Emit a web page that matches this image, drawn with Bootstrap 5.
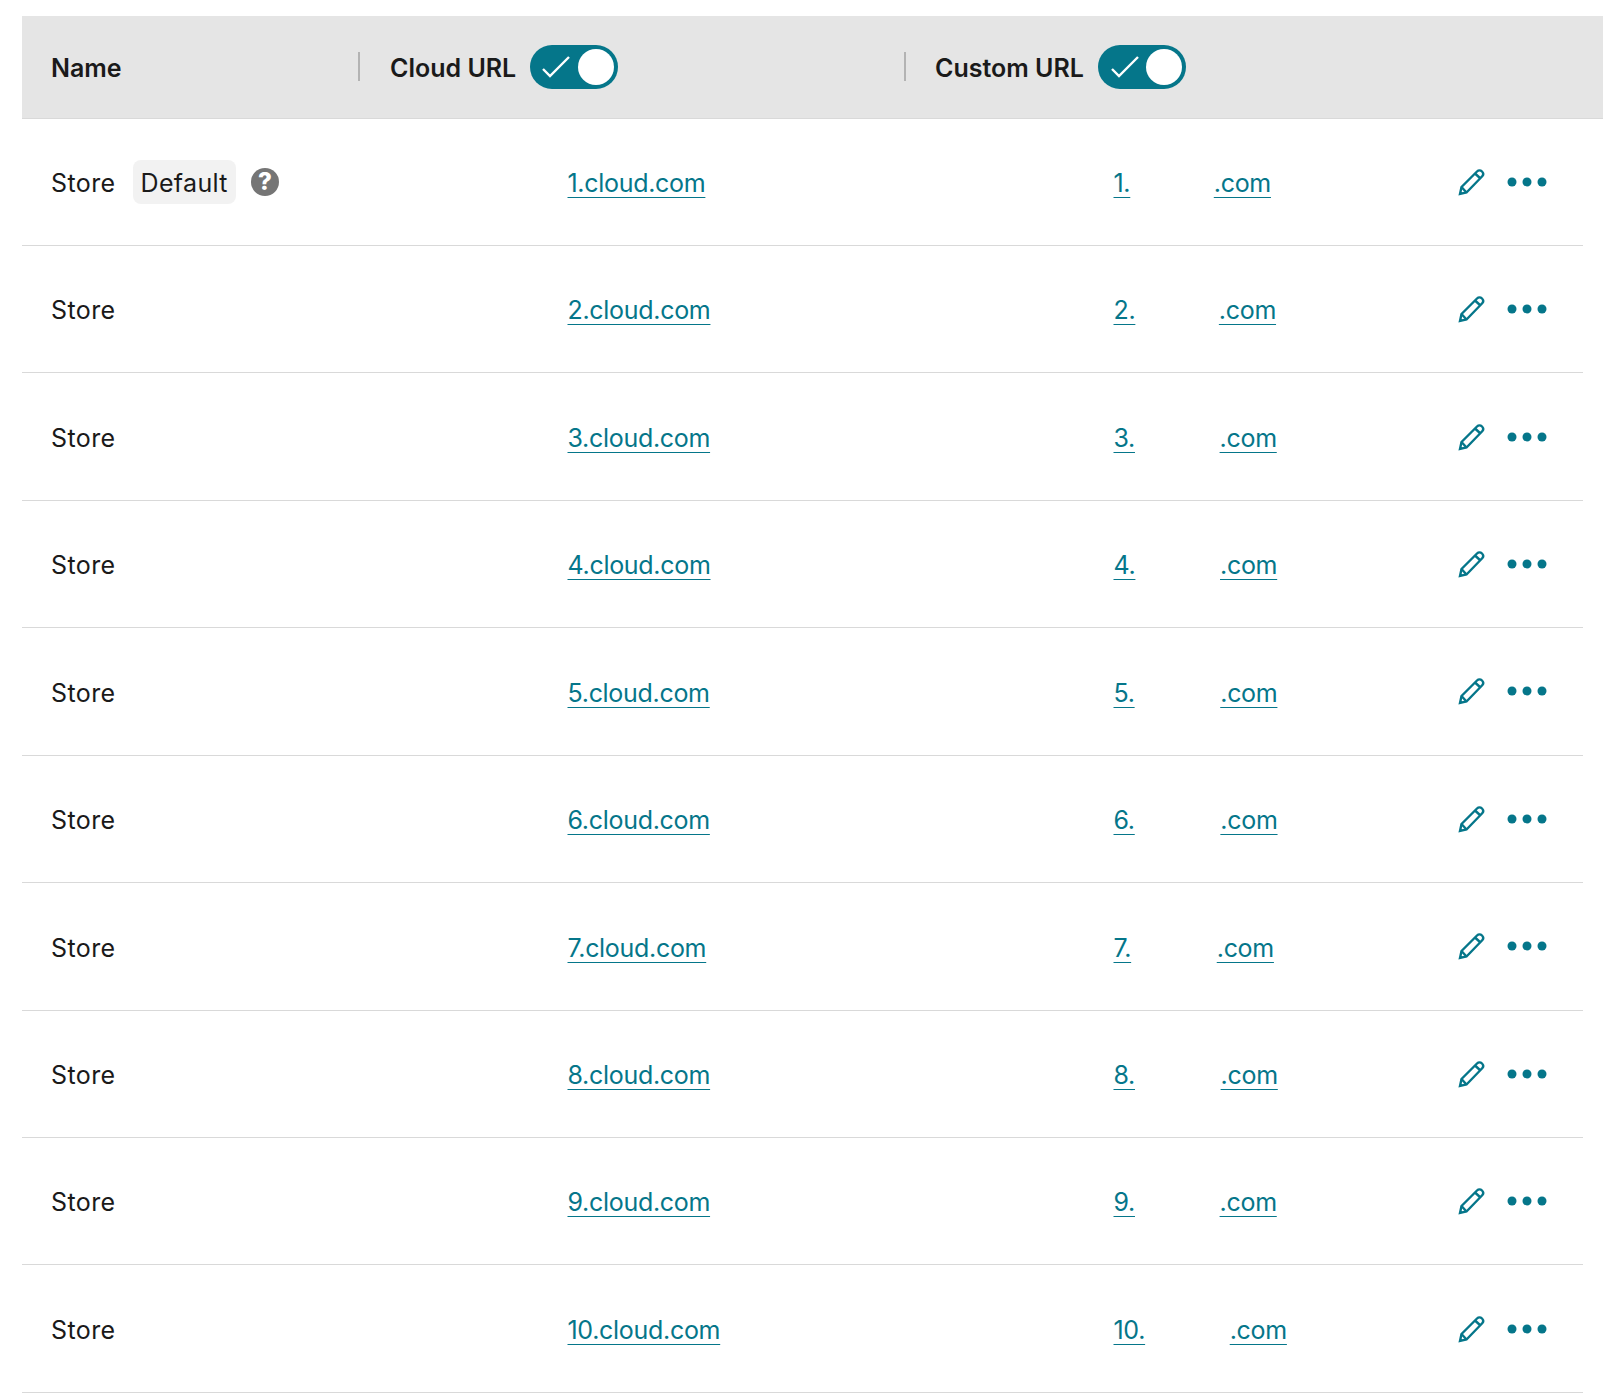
<!DOCTYPE html>
<html lang="en">
<head>
    <meta charset="UTF-8">
    <meta name="viewport" content="width=device-width, initial-scale=1.0">
    <title>Stores</title>
    <link href="https://cdn.jsdelivr.net/npm/bootstrap@5.3.0/dist/css/bootstrap.min.css" rel="stylesheet">
    <style>
        body {
            background-color: #fff;
            color: #1a1a1a;
            font-family: "Inter", "Liberation Sans", sans-serif;
            font-size: 25px;
            padding: 16px 0 0 22px;
        }
        .head-bar {
            height: 102.5px;
            background-color: #e5e5e5;
            border-bottom: 1px solid #d9d9d9;
            font-weight: 600;
        }
        .head-cell { height: 29px; border-left: 2px solid #b3b3b3; padding-left: 29px; gap: 14px; }
        .head-name { width: 336px; padding-left: 29px; padding-top: 4px; }
        .head-cloud { width: 546px; padding-left: 30px; }
        .head-label { padding-top: 4px; }
        .head-toggle {
            width: 87.5px;
            height: 44px;
            padding: 0 4px 0 12px;
            border-radius: 22px;
            background-color: #05768a;
        }
        .head-custom .head-toggle { width: 88.5px; padding-left: 13px; }
        .head-knob { width: 36px; height: 36px; border-radius: 50%; background-color: #fff; }
        .store-row {
            display: grid;
            grid-template-columns: 516.5px 546px 1fr auto;
            align-items: center;
            height: 127.45px;
            margin-right: 20px;
            padding-left: 29px;
            border-bottom: 1px solid #d9d9d9;
        }
        .store-name { padding-top: 4px; letter-spacing: .4px; }
        .store-url { padding-top: 4px; }
        .store-row a {
            color: #05768a;
            letter-spacing: -.3px;
            text-decoration-thickness: 1px;
            text-underline-offset: 5px;
        }
        .url-gap { display: inline-block; }
        .default-pill {
            height: 44px;
            padding: 4px 8px 0;
            margin-left: 17px;
            border-radius: 8px;
            background-color: #f2f2f2;
            letter-spacing: .35px;
        }
        .help-dot {
            width: 28px;
            height: 28px;
            margin-left: 15px;
            border-radius: 50%;
            background-color: #757575;
            color: #fff;
            font-size: 24px;
            font-weight: 800;
        }
        .row-actions { padding-right: 36.5px; gap: 21px; }
        .edit-icon { width: 28px; height: 28px; }
        .more-icon { width: 40px; height: 12px; }
    </style>
</head>
<body>
    <div class="head-bar d-flex align-items-center">
        <div class="head-name">Name</div>
        <div class="head-cell head-cloud d-flex align-items-center">
            <span class="head-label">Cloud URL</span>
            <div class="head-toggle d-flex align-items-center justify-content-between">
                <svg width="28" height="22" viewBox="0 0 28 22" fill="none" stroke="#fff" stroke-width="2.4"><path d="M1 13l7 7L27 1"/></svg>
                <div class="head-knob"></div>
            </div>
        </div>
        <div class="head-cell head-custom d-flex align-items-center">
            <span class="head-label">Custom URL</span>
            <div class="head-toggle d-flex align-items-center justify-content-between">
                <svg width="28" height="22" viewBox="0 0 28 22" fill="none" stroke="#fff" stroke-width="2.4"><path d="M1 13l7 7L27 1"/></svg>
                <div class="head-knob"></div>
            </div>
        </div>
    </div>
    <div id="rows"></div>

    <script>
        // gap after the number part of the custom URL differs a little per row
        var gaps = [83.5, 83.5, 84.6, 84.6, 85.6, 85.6, 85.6, 85.6, 84.6, 84.6];
        var pencil = '<svg class="edit-icon" viewBox="0 0 28 28" fill="none" stroke="#05768a" stroke-width="2.4"><path d="M2 26l1.5-7L19 3.5c1.5-1.5 3.5-1.5 5 0s1.5 3.5 0 5L8.5 24.5z"/><path d="M3.5 19l5 5.5M17 5.5l5.5 5"/></svg>';
        var dots = '<svg class="more-icon" viewBox="0 0 40 12" fill="#05768a"><circle cx="5" cy="6" r="4.5"/><circle cx="20" cy="6" r="4.5"/><circle cx="35" cy="6" r="4.5"/></svg>';
        var html = '';
        gaps.forEach(function(gap, i) {
            var n = i + 1;
            var extra = n === 1
                ? '<span class="default-pill d-inline-flex align-items-center">Default</span><span class="help-dot d-inline-flex align-items-center justify-content-center">?</span>'
                : '';
            html += '<div class="store-row">'
                + '<div class="d-flex align-items-center"><span class="store-name">Store</span>' + extra + '</div>'
                + '<div class="store-url"><a href="#">' + n + '.cloud.com</a></div>'
                + '<div class="store-url"><a href="#">' + n + '.</a><span class="url-gap" style="width:' + gap + 'px"></span><a href="#">.com</a></div>'
                + '<div class="row-actions d-flex align-items-center">' + pencil + dots + '</div>'
                + '</div>';
        });
        document.getElementById('rows').innerHTML = html;
    </script>
    <script src="https://cdn.jsdelivr.net/npm/bootstrap@5.3.0/dist/js/bootstrap.bundle.min.js"></script>
</body>
</html>
